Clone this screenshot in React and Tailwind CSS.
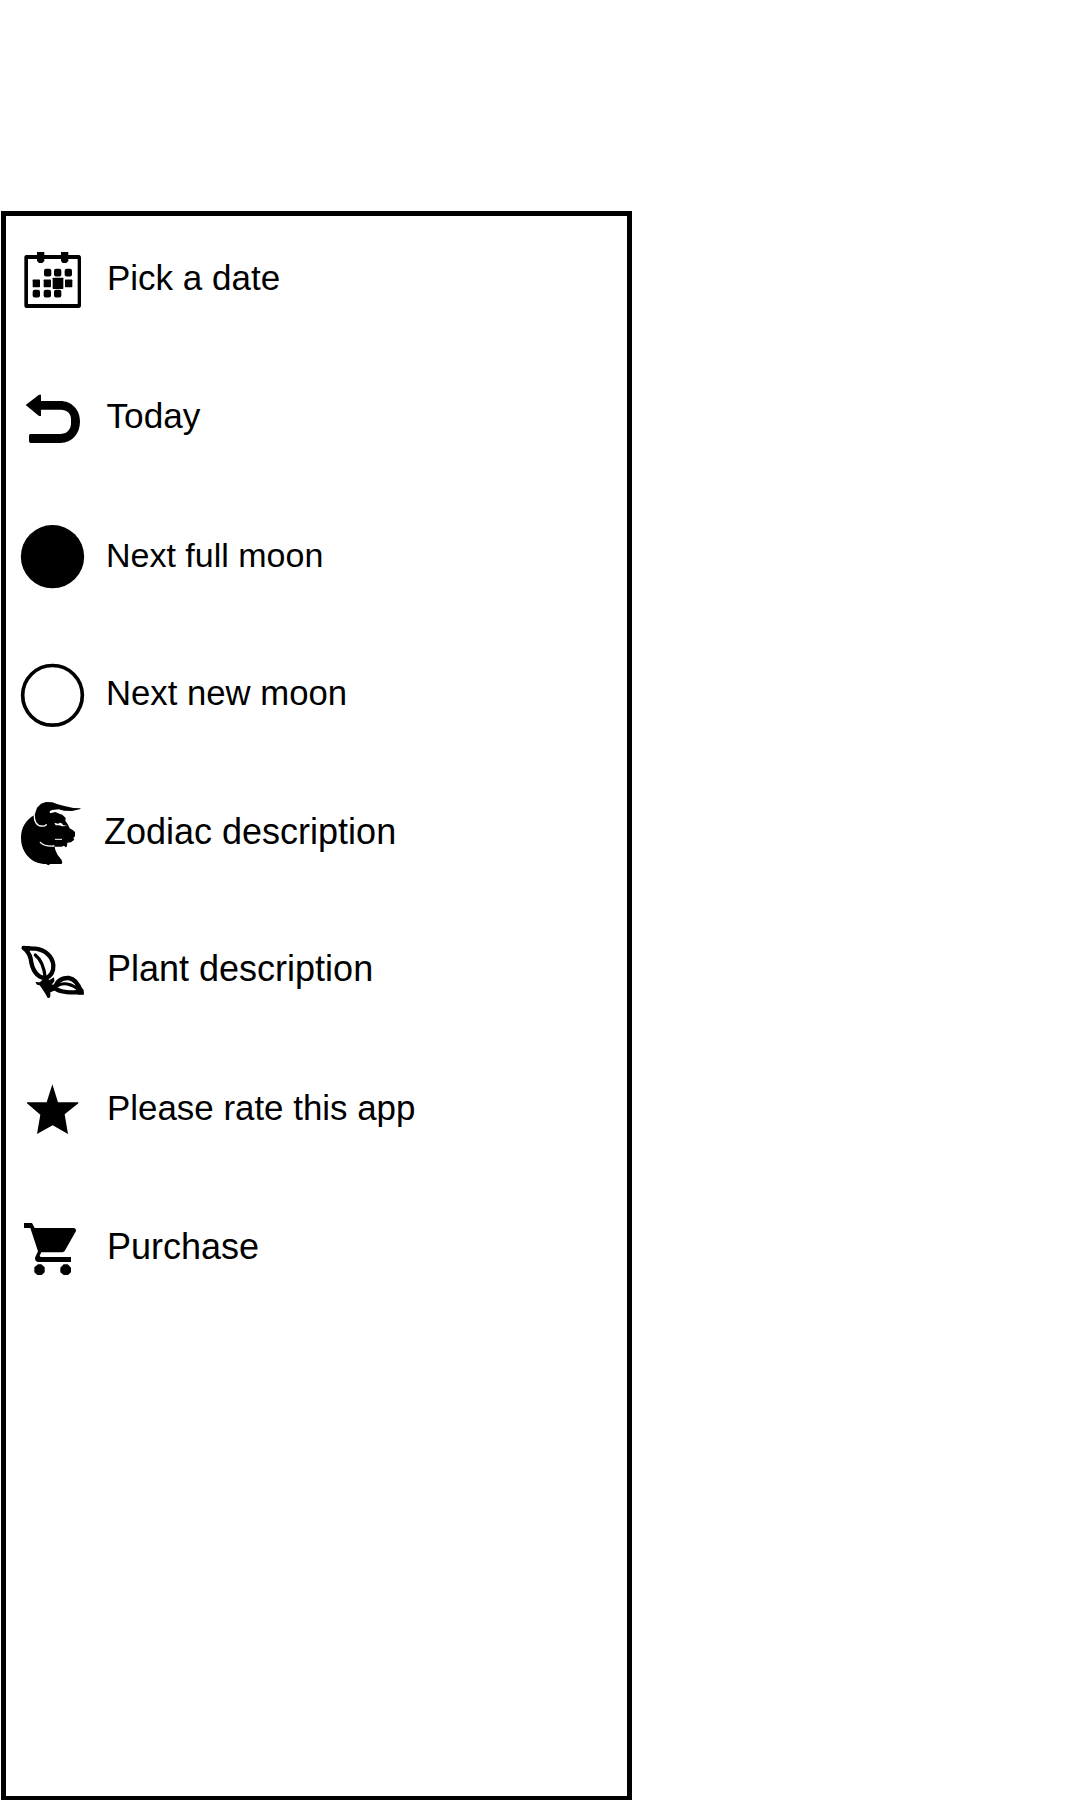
const Icon = ({ viewBox = '0 0 240 240', children }) => (
  <svg viewBox={viewBox} className="mt-[19px] h-20 w-20 shrink-0" fill="currentColor" aria-hidden="true">
    {children}
  </svg>
);

const dots = [
  [113, 98], [143, 98], [175, 98],
  [79, 130], [112, 130], [176, 130],
  [79, 161], [112, 161], [143, 161],
];

const CalendarIcon = () => (
  <Icon>
    <path
      fillRule="evenodd"
      d="M48 45H81V36H103V45H153V36H175V45H208Q213 47 213 52V198Q212 204 206 204H48Q43 202 43 197V51Q43 46 48 45ZM54 57V192H203V57H175V63L169 69H158L153 63V57H103V63L97 69H87L81 63V57Z"
    />
    {dots.map(([x, y]) => (
      <rect key={`${x}-${y}`} x={x - 11} y={y - 11.5} width="22" height="23" rx={y === 130 ? 2 : 6} />
    ))}
    <rect x="128" y="113" width="32" height="34" rx="2" />
  </Icon>
);

const ReturnIcon = () => (
  <Icon viewBox="0 -6 240 240">
    <path d="M47 75L87 44H93V63H151C184 63 210 88 210 124C210 162 187 188 151 189H61Q57 187 57 184V167Q57 163 61 162H153C173 161 183 147 183 130V117C183 100 171 89 152 89H93V108H87Z" />
  </Icon>
);

const FullMoonIcon = () => (
  <Icon>
    <circle cx="127.5" cy="119" r="95" />
  </Icon>
);

const NewMoonIcon = () => (
  <Icon>
    <circle cx="127.5" cy="121" r="89.5" fill="none" stroke="currentColor" strokeWidth="11" />
  </Icon>
);

const TaurusIcon = () => (
  <Icon viewBox="0 12 240 240">
    <path d="M74 75C48 88 33 113 33 143C33 190 67 222 108 222L115 226L121 222H154L157 219L155 210L143 195L136 180L134 170H155L162 167L167 172L171 169L172 158L183 157L193 149L190 145L195 138V126L189 121L179 115L173 103L166 92L167 84L157 74L148 71L136 66L120 70L119 64L126 60L146 58L162 62L186 63L209 58L213 55L190 54L163 48L143 43L127 37L108 36L93 41L81 53L76 68Z" />
    <g fill="none" stroke="white" strokeLinecap="round" strokeLinejoin="round">
      <path strokeWidth="4" d="M73 77C72 94 80 107 94 108C101 109 106 107 109 104M91 157C101 168 116 169 132 168" />
      <path strokeWidth="3" d="M136 148H155" />
    </g>
    <path fill="white" d="M133 98L144 101L151 98L158 102L158 105L172 108L157 109L147 106L137 106Z" />
  </Icon>
);

const LeavesIcon = () => (
  <Icon viewBox="0 3 240 240">
    <g fill="none" stroke="currentColor" strokeLinejoin="round" strokeLinecap="round">
      <path strokeWidth="13" d="M41 54C52 62 58 70 62 86C66 119 79 140 105 145C125 139 131 121 130 105C127 79 106 60 77 56C62 55 53 55 41 54Z" />
      <path strokeWidth="10" d="M76 75C91 87 102 105 106 145" />
      <path strokeWidth="13" d="M136 175C138 155 154 143 176 144C196 147 206 163 213 186C188 189 149 187 136 175Z" />
      <path strokeWidth="9" d="M142 167C158 157 184 160 208 180" />
    </g>
    <path d="M35 48H57L69 56L58 63L48 66Z M76 156L90 157L99 148L103 138H112L117 151L132 142L133 154L125 164L135 163L136 181L121 187V199L118 204H113L107 193L97 177L89 166L81 164Z M192 157L207 163L221 180L222 194H207L192 188L202 178Z" />
  </Icon>
);

const StarIcon = () => (
  <Icon>
    <path d="M127 43L144 97H205V100L164 133L174 192L128 166L81 192L91 134L51 100V97H110Z" />
  </Icon>
);

const CartIcon = () => (
  <Icon viewBox="0 -3 240 240">
    <path d="M42 39H66L74 54H192Q199 56 198 63L164 123Q162 126 157 127H94L89 137L92 141H183V156H84Q74 153 75 143L84 124L61 54H42Z" />
    <path d="M84 163H94L104 172V187L95 195H82L73 187V172Z M161 163H173L183 173V187L174 195H161L151 187V173Z" />
  </Icon>
);

const items = [
  { label: 'Pick a date', Glyph: CalendarIcon, text: 'ml-[17px] text-[35px]' },
  { label: 'Today', Glyph: ReturnIcon, text: 'ml-[16.5px] text-[35.2px]' },
  { label: 'Next full moon', Glyph: FullMoonIcon, text: 'ml-[16px] text-[34px]' },
  { label: 'Next new moon', Glyph: NewMoonIcon, text: 'ml-[16px] text-[34.7px]' },
  { label: 'Zodiac description', Glyph: TaurusIcon, text: 'ml-[14px] text-[36px]' },
  { label: 'Plant description', Glyph: LeavesIcon, text: 'ml-[17px] text-[36px]' },
  { label: 'Please rate this app', Glyph: StarIcon, text: 'ml-[17px] text-[34.9px]' },
  { label: 'Purchase', Glyph: CartIcon, text: 'ml-[17px] text-[36px]' },
];

export default function App() {
  return (
    <main className="h-[1800px] w-[1080px] overflow-hidden bg-white pl-px pt-[211px] font-['Liberation_Sans',Arial,sans-serif] text-black">
      <nav className="h-[1589px] w-[631px] border-[5px] border-b-4 border-black bg-white pl-1 pt-[5px]">
        <ul className="grid grid-rows-[138px_139px_138px_139px_137px_139px_139px_138px]">
          {items.map(({ label, Glyph, text }) => (
            <li key={label} className="flex items-start">
              <Glyph />
              <span className={`whitespace-nowrap leading-[114px] ${text}`}>{label}</span>
            </li>
          ))}
        </ul>
      </nav>
    </main>
  );
}
